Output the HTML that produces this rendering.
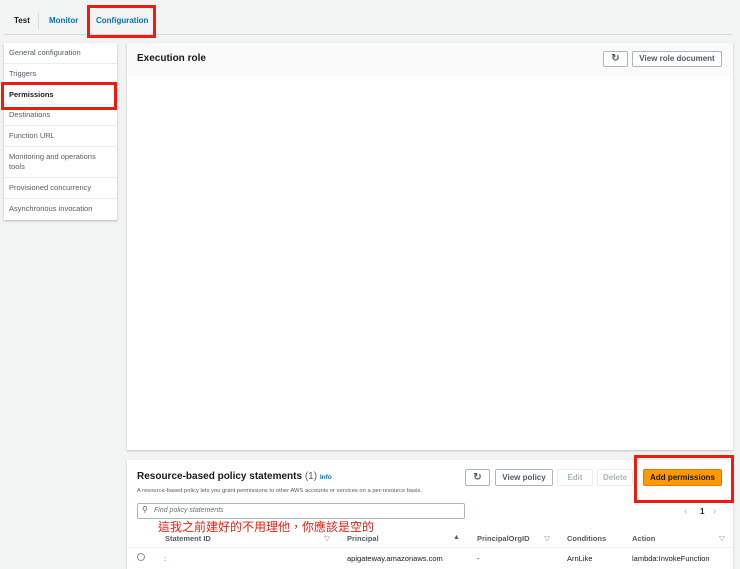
<!DOCTYPE html><html><head><style>
body{margin:0;width:740px;height:569px;background:#f2f3f3;font-family:"Liberation Sans","Noto Sans CJK TC",sans-serif;position:relative;overflow:hidden;color:#16191f}
.a{position:absolute}
.red{position:absolute;border:3px solid #ee1c0f;box-sizing:border-box}
.btn{position:absolute;background:#fff;border:1px solid #aab7b8;border-radius:2px;font-size:8px;font-weight:bold;color:#545b64;text-align:center;box-sizing:border-box}
.side div{height:20.8px;border-bottom:1px solid #eaeded;font-size:7.5px;color:#545b64;padding-left:5px;padding-right:14px;line-height:20px;box-sizing:border-box}
.th{position:absolute;top:534px;font-size:7.5px;font-weight:bold;color:#545b64}
.td{position:absolute;top:554px;font-size:7.5px;color:#16191f}
</style></head><body>
<div class="a" style="left:14px;top:16px;font-size:8px;font-weight:bold;color:#16191f">Test</div>
<div class="a" style="left:38px;top:13px;width:1px;height:16px;background:#d5dbdb"></div>
<div class="a" style="left:49px;top:16px;font-size:8px;font-weight:bold;color:#0073bb">Monitor</div>
<div class="a" style="left:96px;top:16px;font-size:8px;font-weight:bold;color:#0073bb">Configuration</div>
<div class="a" style="left:4px;top:34px;width:728px;height:1px;background:#d5dbdb"></div>
<div class="red" style="left:87px;top:5px;width:69px;height:33px"></div>

<div class="a side" style="left:4px;top:43px;width:113px;height:177px;background:#fff;box-shadow:0 1px 2px rgba(0,0,0,.25)">
<div>General configuration</div><div>Triggers</div><div style="font-weight:bold;color:#16191f">Permissions</div><div>Destinations</div><div>Function URL</div>
<div style="height:31px;line-height:10px;padding-top:5px">Monitoring and operations tools</div>
<div>Provisioned concurrency</div><div style="border:none">Asynchronous invocation</div></div>
<div class="red" style="left:1px;top:82px;width:116px;height:28px"></div>

<div class="a" style="left:127px;top:43px;width:606px;height:407px;background:#fff;box-shadow:0 1px 2px rgba(0,0,0,.2)"></div>
<div class="a" style="left:127px;top:43px;width:606px;height:33px;background:#fafafa"></div>
<div class="a" style="left:137px;top:53px;font-size:10px;font-weight:bold">Execution role</div>
<div class="btn" style="left:603px;top:51px;width:25px;height:16px;line-height:14px;font-size:10px">↻</div>
<div class="btn" style="left:632px;top:51px;width:90px;height:16px;line-height:14px">View role document</div>

<div class="a" style="left:127px;top:460px;width:606px;height:109px;background:#fff;box-shadow:0 1px 2px rgba(0,0,0,.2)"></div>
<div class="a" style="left:137px;top:471px;font-size:10px;font-weight:bold">Resource-based policy statements <span style="font-weight:normal;color:#545b64">(1)</span> <span style="font-size:6.5px;color:#0073bb">Info</span></div>
<div class="a" style="left:137px;top:488px;font-size:5.8px;color:#545b64">A resource-based policy lets you grant permissions to other AWS accounts or services on a per-resource basis.</div>
<div class="btn" style="left:465px;top:469px;width:25px;height:17px;line-height:15px;font-size:10px">↻</div>
<div class="btn" style="left:495px;top:469px;width:58px;height:17px;line-height:15px">View policy</div>
<div class="btn" style="left:557px;top:469px;width:36px;height:17px;line-height:15px;color:#aab7b8;border-color:#eaeded">Edit</div>
<div class="btn" style="left:597px;top:469px;width:36px;height:17px;line-height:15px;color:#aab7b8;border-color:#eaeded">Delete</div>
<div class="btn" style="left:643px;top:469px;width:79px;height:17px;line-height:15px;background:#ff9900;border-color:#ec7211;color:#16191f">Add permissions</div>
<div class="red" style="left:634px;top:455px;width:100px;height:48px"></div>
<div class="a" style="left:137px;top:503px;width:328px;height:16px;border:1px solid #aab7b8;border-radius:2px;box-sizing:border-box;font-size:7px;font-style:italic;color:#687078;line-height:14px;padding-left:16px">Find policy statements</div>
<div class="a" style="left:142px;top:505px;font-size:8px;color:#545b64">⚲</div>
<div class="a" style="left:684px;top:506px;font-size:10px;color:#aab7b8">‹</div>
<div class="a" style="left:700px;top:507px;font-size:8px;font-weight:bold">1</div>
<div class="a" style="left:713px;top:506px;font-size:10px;color:#aab7b8">›</div>
<div class="a" style="left:158px;top:518px;font-size:12px;color:#ee1c0f">這我之前建好的不用理他，你應該是空的</div>
<div class="th" style="left:165px">Statement ID</div><div class="th" style="left:324px;font-size:6px">▽</div>
<div class="th" style="left:347px">Principal</div><div class="th" style="left:453px;font-size:7px">▲</div>
<div class="th" style="left:477px">PrincipalOrgID</div><div class="th" style="left:544px;font-size:6px">▽</div>
<div class="th" style="left:567px">Conditions</div>
<div class="th" style="left:632px">Action</div><div class="th" style="left:719px;font-size:6px">▽</div>
<div class="a" style="left:127px;top:547px;width:606px;height:1px;background:#eaeded"></div>
<div class="a" style="left:137px;top:553px;width:6px;height:6px;border:1px solid #879596;border-radius:50%"></div>
<div class="td" style="left:164px;color:#0073bb">:</div>
<div class="td" style="left:347px">apigateway.amazonaws.com</div>
<div class="td" style="left:477px">-</div>
<div class="td" style="left:567px">ArnLike</div>
<div class="td" style="left:632px">lambda:InvokeFunction</div>
</body></html>
